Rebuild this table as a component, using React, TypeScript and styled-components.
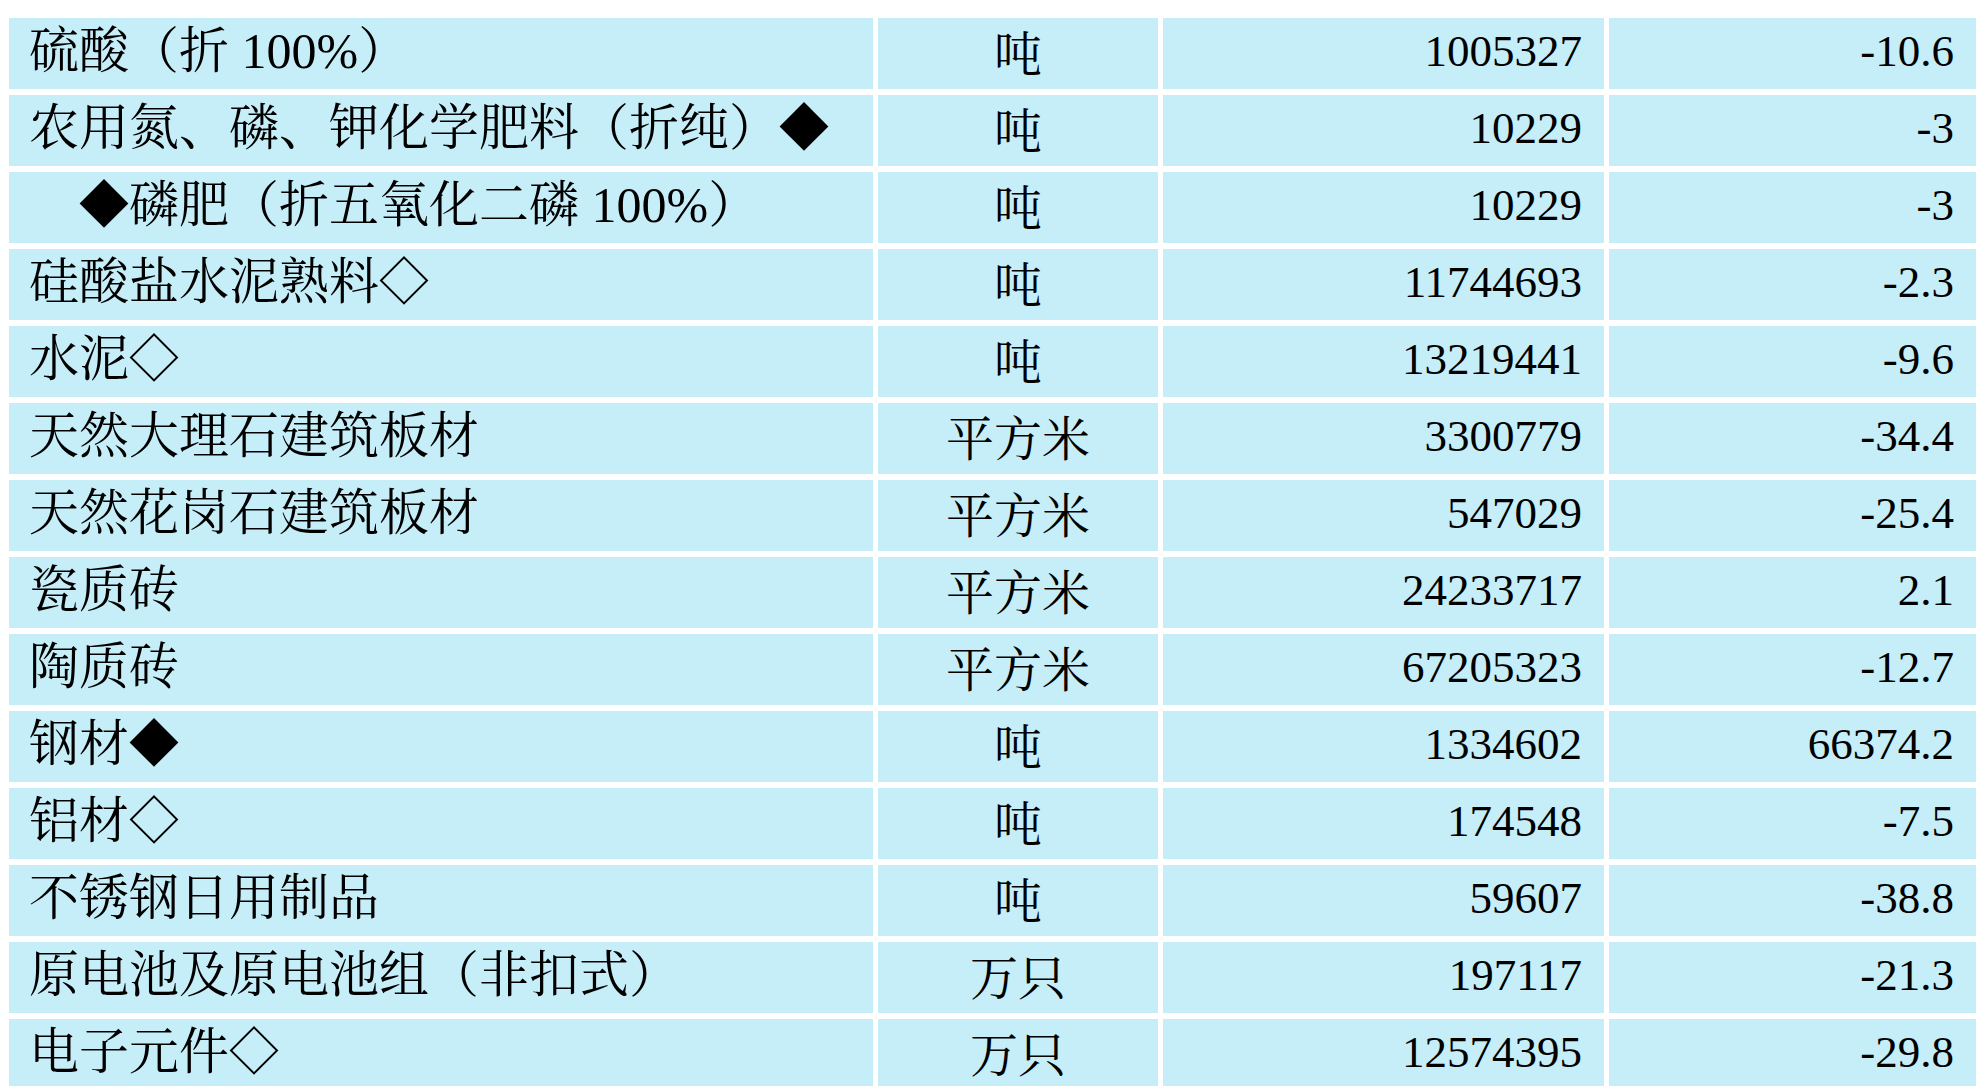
import React from "react";
import styled, { createGlobalStyle } from "styled-components";

const GlobalStyle = createGlobalStyle`
  html, body {
    margin: 0;
    padding: 0;
    background: #ffffff;
    overflow: hidden;
  }
`;

const Page = styled.div`
  padding: 18px 3px 0 9px;
  height: 1086px;
  box-sizing: border-box;
  overflow: hidden;
`;

const Table = styled.div`
  display: grid;
  grid-template-columns: 864px 280px 441px 367px;
  grid-auto-rows: 71px;
  column-gap: 5px;
  row-gap: 6px;
`;

const Cell = styled.div<{ $align?: "left" | "center" | "right"; $indent?: boolean }>`
  background: #c6eef8;
  display: flex;
  align-items: center;
  justify-content: ${(p) =>
    p.$align === "right" ? "flex-end" : p.$align === "center" ? "center" : "flex-start"};
  padding: 0 ${(p) => (p.$align === "right" ? "22px" : "0")} 6px
    ${(p) => (p.$align === "left" ? (p.$indent ? "70px" : "20px") : "0")};
  color: #000;
  white-space: nowrap;
`;

const Label = styled.span`
  font-family: "Liberation Serif", "Noto Serif CJK SC", "Noto Sans CJK SC", serif;
  font-size: 50px;
  line-height: 1.2;
`;

const Unit = styled.span`
  font-family: "Noto Serif CJK SC", "Noto Sans CJK SC", serif;
  font-size: 48px;
  line-height: 1.2;
`;

const Num = styled.span`
  font-family: "Liberation Serif", "Times New Roman", serif;
  font-size: 45px;
  line-height: 1.2;
`;

interface row {
  name: string;
  unit: string;
  value: string;
  change: string;
  indent?: boolean;
}

const rows: row[] = [
  { name: "硫酸（折 100%）", unit: "吨", value: "1005327", change: "-10.6" },
  { name: "农用氮、磷、钾化学肥料（折纯）◆", unit: "吨", value: "10229", change: "-3" },
  { name: "◆磷肥（折五氧化二磷 100%）", unit: "吨", value: "10229", change: "-3", indent: true },
  { name: "硅酸盐水泥熟料◇", unit: "吨", value: "11744693", change: "-2.3" },
  { name: "水泥◇", unit: "吨", value: "13219441", change: "-9.6" },
  { name: "天然大理石建筑板材", unit: "平方米", value: "3300779", change: "-34.4" },
  { name: "天然花岗石建筑板材", unit: "平方米", value: "547029", change: "-25.4" },
  { name: "瓷质砖", unit: "平方米", value: "24233717", change: "2.1" },
  { name: "陶质砖", unit: "平方米", value: "67205323", change: "-12.7" },
  { name: "钢材◆", unit: "吨", value: "1334602", change: "66374.2" },
  { name: "铝材◇", unit: "吨", value: "174548", change: "-7.5" },
  { name: "不锈钢日用制品", unit: "吨", value: "59607", change: "-38.8" },
  { name: "原电池及原电池组（非扣式）", unit: "万只", value: "197117", change: "-21.3" },
  { name: "电子元件◇", unit: "万只", value: "12574395", change: "-29.8" },
];

const App = () => {
  return (
    <>
      <GlobalStyle />
      <Page>
        <Table>
          {rows.map((r, index) => (
            <React.Fragment key={index}>
              <Cell $align="left" $indent={r.indent}>
                <Label>{r.name}</Label>
              </Cell>
              <Cell $align="center">
                <Unit>{r.unit}</Unit>
              </Cell>
              <Cell $align="right">
                <Num>{r.value}</Num>
              </Cell>
              <Cell $align="right">
                <Num>{r.change}</Num>
              </Cell>
            </React.Fragment>
          ))}
        </Table>
      </Page>
    </>
  );
};

export default App;
